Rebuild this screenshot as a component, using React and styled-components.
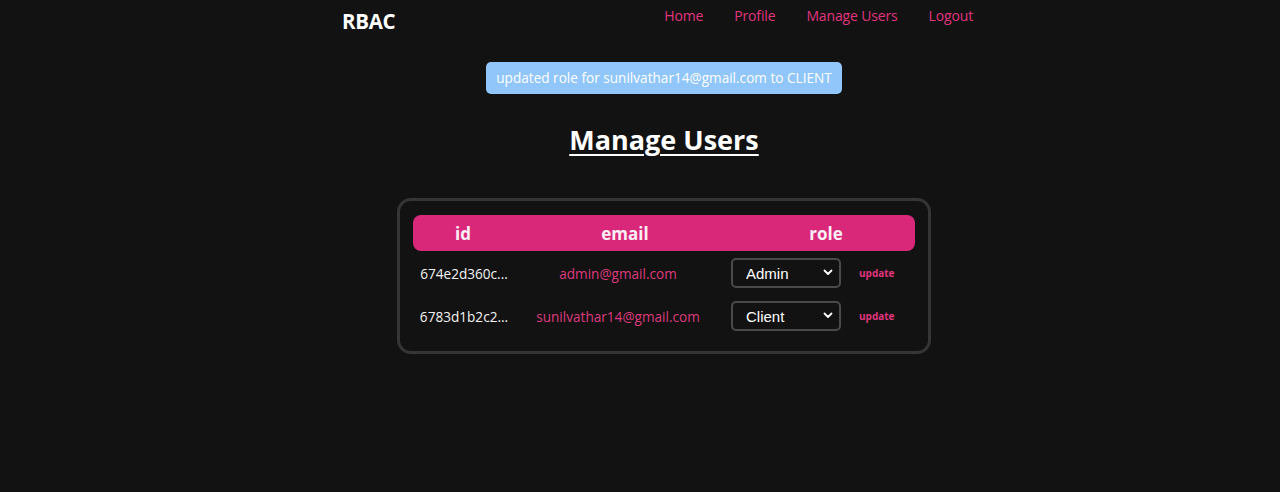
import React from 'react';
import styled, { createGlobalStyle } from 'styled-components';

const GlobalStyle = createGlobalStyle`
  html, body {
    margin: 0;
    padding: 0;
    background: #121212;
    font-family: 'Open Sans', 'Noto Sans', sans-serif;
    color: #ffffff;
  }
`;

const Page = styled.div`
  min-height: 492px;
  background: #121212;
`;

const Header = styled.header`
  display: flex;
  justify-content: space-between;
  align-items: flex-start;
  width: 631px;
  margin-left: 342px;
  padding-top: 6px;
  height: 34px;
`;

const Logo = styled.div`
  font-size: 20.5px;
  font-weight: 700;
  line-height: 26px;
  padding-top: 2px;
  letter-spacing: -0.3px;
`;

const Nav = styled.nav`
  display: flex;
  gap: 31px;
`;

const NavLink = styled.a`
  color: #e0357e;
  font-size: 14px;
  letter-spacing: -0.15px;
  line-height: 20px;
  text-decoration: none;
  cursor: pointer;
`;

const Main = styled.main`
  padding-left: 48px;
  display: flex;
  flex-direction: column;
  align-items: center;
`;

const Flash = styled.div`
  margin-top: 22px;
  background: #90c6f9;
  color: #ffffff;
  font-size: 13.6px;
  line-height: 32px;
  padding: 0 10px;
  border-radius: 5px;
`;

const Title = styled.h1`
  margin: 26px 0 0;
  font-size: 27px;
  font-weight: 700;
  line-height: 40px;
  text-decoration: underline;
  text-decoration-thickness: 2px;
  text-underline-offset: 4px;
`;

const Card = styled.div`
  margin-top: 38px;
  width: 502px;
  padding: 14px 13px 20px;
  border: 3px solid #353535;
  border-radius: 14px;
`;

const HeadRow = styled.div`
  display: grid;
  grid-template-columns: 100px 224px 178px;
  align-items: center;
  height: 36px;
  background: #d9287a;
  border-radius: 8px;
`;

const HeadCell = styled.div`
  text-align: center;
  font-size: 17px;
  font-weight: 700;
  color: #fbeef4;
`;

const Row = styled.div`
  display: grid;
  grid-template-columns: 102px 206px 194px;
  align-items: center;
  margin-top: ${p => (p.$first ? '7px' : '13px')};
  height: 30px;
`;

const IdCell = styled.div`
  text-align: center;
  font-size: 13.6px;
  color: #f2f2f2;
`;

const EmailCell = styled.div`
  text-align: center;
  font-size: 13.6px;
  color: #de3a7d;
`;

const RoleCell = styled.div`
  display: flex;
  align-items: center;
  padding-left: 10px;
  gap: 18px;
`;

const SelectWrap = styled.div`
  position: relative;
  width: 110px;
  height: 30px;
`;

const Select = styled.select`
  appearance: none;
  width: 110px;
  height: 30px;
  box-sizing: border-box;
  background: #121212;
  color: #ffffff;
  border: 2px solid #4a4a4a;
  border-radius: 5px;
  padding: 0 0 0 13px;
  font-family: 'Liberation Sans', Arial, sans-serif;
  font-size: 15px;
  outline: none;
`;

const Chevron = styled.svg`
  position: absolute;
  right: 8px;
  top: 11px;
  pointer-events: none;
`;

const UpdateButton = styled.button`
  background: none;
  border: none;
  padding: 0;
  color: #e0357e;
  font-family: 'Open Sans', sans-serif;
  font-size: 10px;
  font-weight: 700;
  cursor: pointer;
`;

const users = [
  { id: '674e2d360c...', email: 'admin@gmail.com', role: 'ADMIN' },
  { id: '6783d1b2c2...', email: 'sunilvathar14@gmail.com', role: 'CLIENT' },
];

const App = () => {
  const [roles, setRoles] = React.useState(users.map(u => u.role));

  return (
    <Page>
      <GlobalStyle />
      <Header>
        <Logo>RBAC</Logo>
        <Nav>
          <NavLink>Home</NavLink>
          <NavLink>Profile</NavLink>
          <NavLink>Manage Users</NavLink>
          <NavLink>Logout</NavLink>
        </Nav>
      </Header>
      <Main>
        <Flash>updated role for sunilvathar14@gmail.com to CLIENT</Flash>
        <Title>Manage Users</Title>
        <Card>
          <HeadRow>
            <HeadCell>id</HeadCell>
            <HeadCell>email</HeadCell>
            <HeadCell>role</HeadCell>
          </HeadRow>
          {users.map((u, i) => (
            <Row key={u.id} $first={i === 0}>
              <IdCell>{u.id}</IdCell>
              <EmailCell>{u.email}</EmailCell>
              <RoleCell>
                <SelectWrap>
                  <Select
                    value={roles[i]}
                    onChange={e => setRoles(roles.map((r, j) => (j === i ? e.target.value : r)))}
                  >
                    <option value="ADMIN">Admin</option>
                    <option value="MODERATOR">Moderator</option>
                    <option value="CLIENT">Client</option>
                  </Select>
                  <Chevron width="10" height="7" viewBox="0 0 10 7">
                    <path d="M1.5 1.5 L5 5 L8.5 1.5" fill="none" stroke="#ffffff" strokeWidth="1.8" strokeLinecap="round" strokeLinejoin="round" />
                  </Chevron>
                </SelectWrap>
                <UpdateButton>update</UpdateButton>
              </RoleCell>
            </Row>
          ))}
        </Card>
      </Main>
    </Page>
  );
};

export default App;
